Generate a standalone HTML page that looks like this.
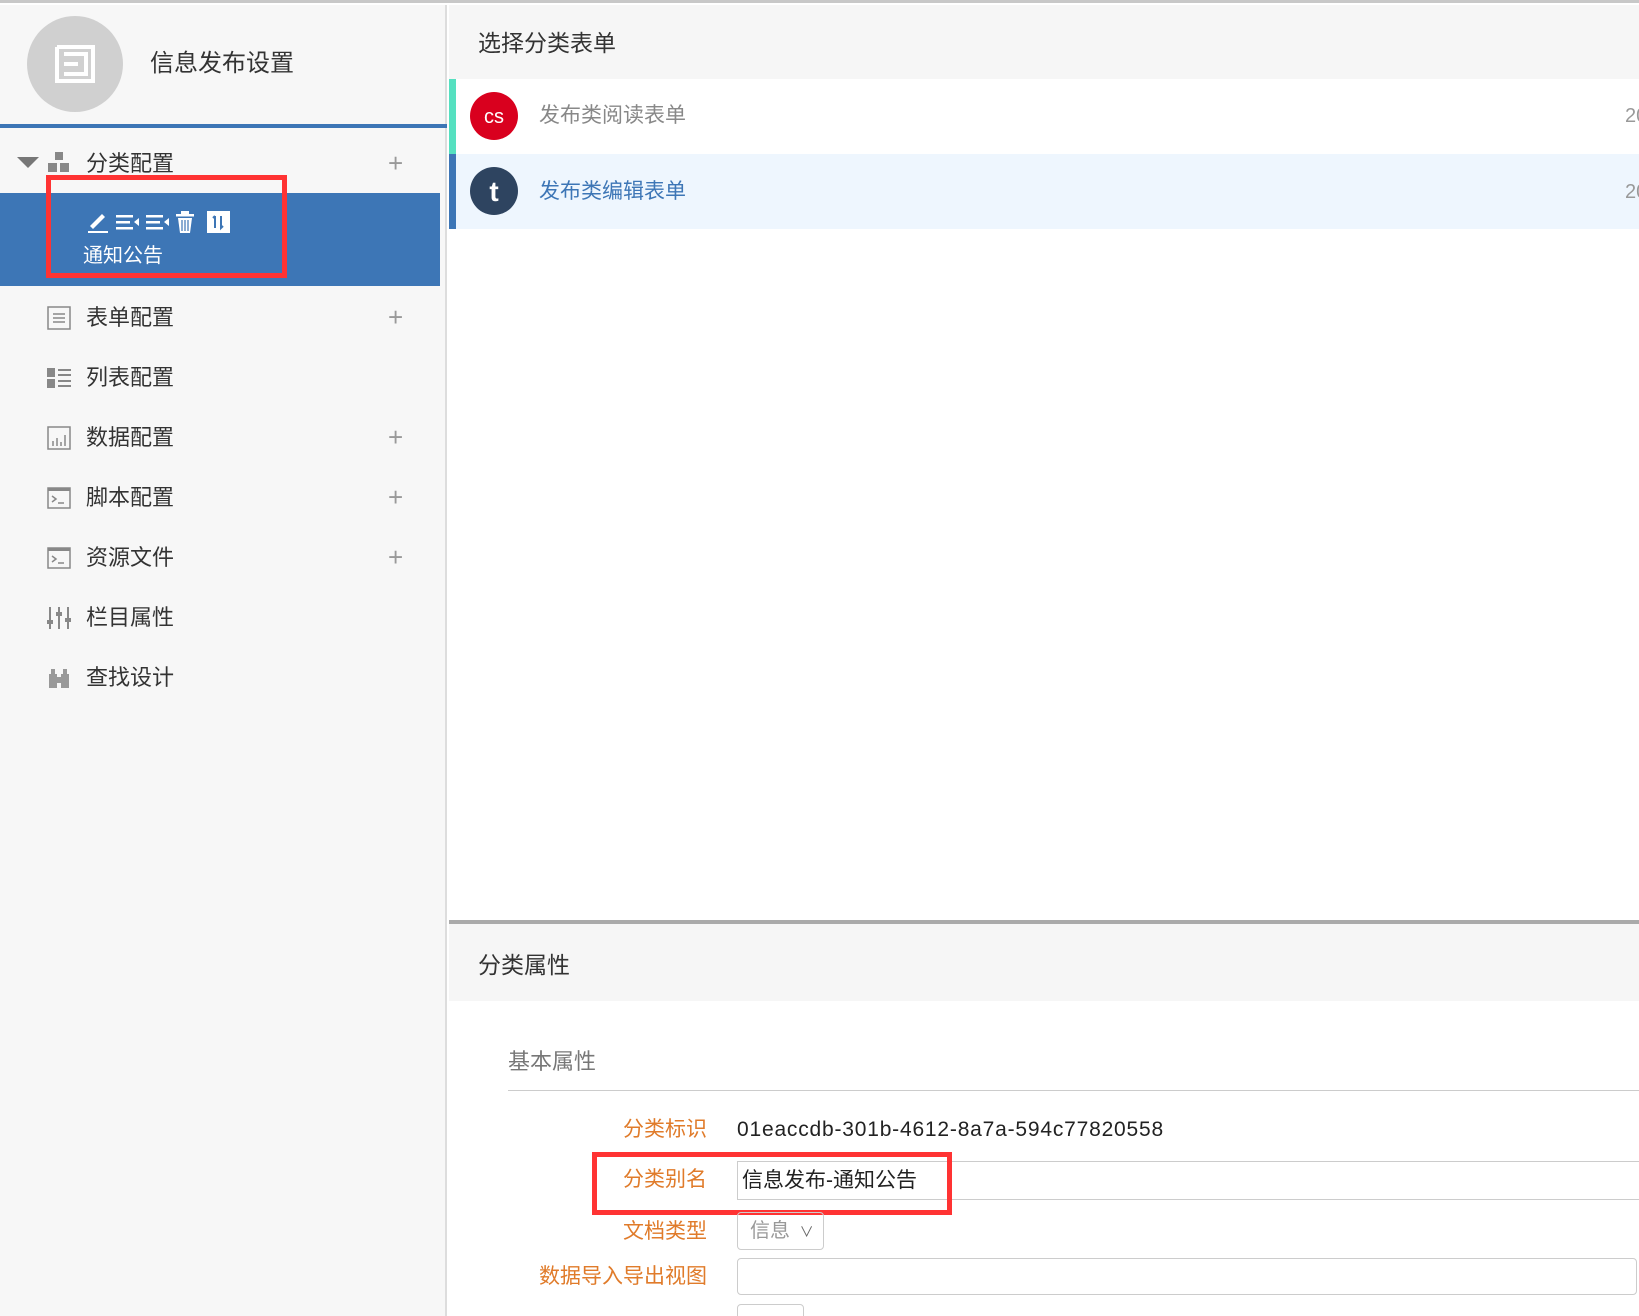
<!DOCTYPE html>
<html><head><meta charset="utf-8">
<style>
*{margin:0;padding:0;box-sizing:border-box}
html,body{width:1639px;height:1316px;overflow:hidden}
body{background:#fff;position:relative;font-family:"Liberation Sans","Noto Sans CJK SC",sans-serif}
.a{position:absolute}
.mi{position:absolute;left:86px;font-size:22px;color:#333;line-height:30px}
.ic{position:absolute;left:47px;width:24px;height:24px}
.plus{position:absolute;left:388px;font-size:26px;color:#999;line-height:30px;font-weight:300}
.lbl{position:absolute;right:932px;font-size:21px;color:#e07b2a;line-height:30px;text-align:right;white-space:nowrap}
</style></head><body>
<div class="a" style="left:0;top:0;width:1639px;height:5px;background:#fff;border-top:3px solid #c8c8c8"></div>
<div class="a" style="left:0;top:5px;width:447px;height:1311px;background:#f7f7f7;border-right:2px solid #ddd"></div>
<div class="a" style="left:27px;top:16px;width:96px;height:96px;border-radius:50%;background:#d0d0d0"></div>
<svg class="a" style="left:54px;top:44px" width="42" height="40" viewBox="0 0 42 40"><path d="M3 3H39V37H3V3M10 10H32V30H10M10 20H24" fill="none" stroke="#fff" stroke-width="4"/></svg>
<div class="a" style="left:150px;top:47px;font-size:24px;color:#333;line-height:34px">信息发布设置</div>
<div class="a" style="left:0;top:124px;width:447px;height:4px;background:#3d76b6"></div>
<svg class="a" style="left:17px;top:157px" width="22" height="12"><path d="M0 0H22L11 11Z" fill="#777"/></svg>
<svg class="a" style="left:48px;top:152px" width="22" height="22"><rect x="7" y="0" width="8" height="8" fill="#888"/><rect x="0" y="11" width="9" height="9" fill="#888"/><rect x="12" y="11" width="9" height="9" fill="#888"/></svg>
<div class="mi" style="top:149px">分类配置</div>
<div class="plus" style="top:148px">+</div>
<div class="a" style="left:0;top:193px;width:440px;height:93px;background:#3d76b6"></div>
<svg class="a" style="left:86px;top:206px" width="150" height="30" viewBox="0 0 150 30">
<path d="M4 20L16 8L19 11L7 23Z" fill="#fff"/><rect x="2" y="25" width="20" height="2" fill="#fff"/>
<g fill="#fff"><rect x="30" y="9" width="17" height="2.5"/><rect x="30" y="15" width="14" height="2.5"/><rect x="30" y="21" width="17" height="2.5"/><path d="M48 16L53 12V20Z"/>
<rect x="60" y="9" width="17" height="2.5"/><rect x="60" y="15" width="14" height="2.5"/><rect x="60" y="21" width="17" height="2.5"/><path d="M78 16L83 12V20Z"/>
<rect x="90" y="8" width="18" height="2.5"/><rect x="95" y="5" width="8" height="3"/><path d="M92 12H106L104 27H94Z"/></g>
<path d="M96 14V25M99 14V25M102 14V25" stroke="#3d76b6" stroke-width="1.2"/>
<rect x="121" y="5" width="23" height="22" fill="#fff"/><path d="M129 10V22M127 12L129 10M135 10V22L137 20" stroke="#3d76b6" stroke-width="2" fill="none"/>
</svg>
<div class="a" style="left:83px;top:242px;font-size:20px;color:#fff;line-height:28px">通知公告</div>
<div class="a" style="left:46px;top:175px;width:241px;height:103px;border:5px solid #f33"></div>

<svg class="ic" style="top:306px" viewBox="0 0 24 24"><rect x="1" y="1" width="22" height="22" fill="none" stroke="#888" stroke-width="1.5"/><path d="M6 8H18M6 12H18M6 16H18" stroke="#888" stroke-width="1.5"/></svg>
<div class="mi" style="top:303px">表单配置</div><div class="plus" style="top:302px">+</div>
<svg class="ic" style="top:366px" viewBox="0 0 24 24"><rect x="0" y="2" width="8" height="9" fill="#888"/><rect x="0" y="13" width="8" height="9" fill="#888"/><path d="M11 4H24M11 9H24M11 15H24M11 20H24" stroke="#888" stroke-width="2"/></svg>
<div class="mi" style="top:363px">列表配置</div>
<svg class="ic" style="top:426px" viewBox="0 0 24 24"><rect x="1" y="1" width="22" height="22" fill="none" stroke="#888" stroke-width="1.5"/><path d="M6 20V15M10 20V12M14 20V16M18 20V9" stroke="#888" stroke-width="1.5"/></svg>
<div class="mi" style="top:423px">数据配置</div><div class="plus" style="top:422px">+</div>
<svg class="ic" style="top:486px" viewBox="0 0 24 24"><rect x="1" y="2" width="22" height="20" fill="none" stroke="#888" stroke-width="1.5"/><rect x="1" y="2" width="22" height="3" fill="#888"/><path d="M5 10L9 13L5 16M11 17H17" stroke="#888" stroke-width="1.5" fill="none"/></svg>
<div class="mi" style="top:483px">脚本配置</div><div class="plus" style="top:482px">+</div>
<svg class="ic" style="top:546px" viewBox="0 0 24 24"><rect x="1" y="2" width="22" height="20" fill="none" stroke="#888" stroke-width="1.5"/><rect x="1" y="2" width="22" height="3" fill="#888"/><path d="M5 10L9 13L5 16M11 17H17" stroke="#888" stroke-width="1.5" fill="none"/></svg>
<div class="mi" style="top:543px">资源文件</div><div class="plus" style="top:542px">+</div>
<svg class="ic" style="top:606px" viewBox="0 0 24 24"><path d="M3 1V23M12 1V23M21 1V23" stroke="#888" stroke-width="2"/><rect x="0" y="14" width="6" height="4" fill="#888"/><rect x="9" y="6" width="6" height="4" fill="#888"/><rect x="18" y="12" width="6" height="4" fill="#888"/></svg>
<div class="mi" style="top:603px">栏目属性</div>
<svg class="ic" style="top:666px" viewBox="0 0 24 24"><path d="M2 8H10V22H2ZM14 8H22V22H14ZM4 3H8V8H4ZM16 3H20V8H16ZM9 11H15V17H9Z" fill="#999"/></svg>
<div class="mi" style="top:663px">查找设计</div>

<div class="a" style="left:449px;top:5px;width:1190px;height:74px;background:#f6f6f6"></div>
<div class="a" style="left:478px;top:27px;font-size:23px;color:#333;line-height:32px">选择分类表单</div>
<div class="a" style="left:449px;top:79px;width:7px;height:75px;background:#55e0c0"></div>
<svg class="a" style="left:470px;top:92px" width="48" height="48"><circle cx="24" cy="24" r="24" fill="#d9001e"/><text x="24" y="31" text-anchor="middle" font-size="20" fill="#fff" font-family="Liberation Sans">cs</text></svg>
<div class="a" style="left:539px;top:101px;font-size:21px;color:#888;line-height:30px">发布类阅读表单</div>
<div class="a" style="left:1625px;top:101px;font-size:20px;color:#999;line-height:30px;white-space:nowrap">20</div>
<div class="a" style="left:449px;top:154px;width:1190px;height:75px;background:#eef6fe"></div>
<div class="a" style="left:449px;top:154px;width:7px;height:75px;background:#3d76b6"></div>
<svg class="a" style="left:470px;top:167px" width="48" height="48"><circle cx="24" cy="24" r="24" fill="#2e4460"/><text x="24" y="34" text-anchor="middle" font-size="28" font-weight="bold" fill="#fff" font-family="Liberation Sans">t</text></svg>
<div class="a" style="left:539px;top:177px;font-size:21px;color:#3d76b6;line-height:30px">发布类编辑表单</div>
<div class="a" style="left:1625px;top:177px;font-size:20px;color:#999;line-height:30px;white-space:nowrap">20</div>

<div class="a" style="left:449px;top:920px;width:1190px;height:4px;background:#aaa"></div>
<div class="a" style="left:449px;top:924px;width:1190px;height:77px;background:#f6f6f6"></div>
<div class="a" style="left:478px;top:949px;font-size:23px;color:#333;line-height:32px">分类属性</div>
<div class="a" style="left:508px;top:1046px;font-size:22px;color:#777;line-height:32px">基本属性</div>
<div class="a" style="left:508px;top:1090px;width:1131px;height:1px;background:#ccc"></div>

<div class="lbl" style="top:1115px">分类标识</div>
<div class="a" style="left:737px;top:1115px;font-size:21px;color:#222;line-height:30px;letter-spacing:0.8px;white-space:nowrap">01eaccdb-301b-4612-8a7a-594c77820558</div>
<div class="lbl" style="top:1165px">分类别名</div>
<div class="a" style="left:737px;top:1161px;width:910px;height:39px;border:1px solid #ccc;font-size:21px;color:#222;line-height:37px;padding-left:4px">信息发布-通知公告</div>
<div class="a" style="left:592px;top:1152px;width:360px;height:63px;border:5px solid #f33"></div>
<div class="lbl" style="top:1217px">文档类型</div>
<div class="a" style="left:737px;top:1212px;width:87px;height:38px;border:1px solid #ccc;border-radius:4px;font-size:20px;color:#999;line-height:36px;padding-left:12px">信息 <span style="font-size:14px;color:#666;margin-left:4px">&#8744;</span></div>
<div class="lbl" style="top:1262px">数据导入导出视图</div>
<div class="a" style="left:737px;top:1258px;width:900px;height:37px;border:1px solid #ccc;border-radius:4px"></div>
<div class="a" style="left:737px;top:1304px;width:67px;height:30px;border:1px solid #ccc;border-radius:4px"></div>
</body></html>
